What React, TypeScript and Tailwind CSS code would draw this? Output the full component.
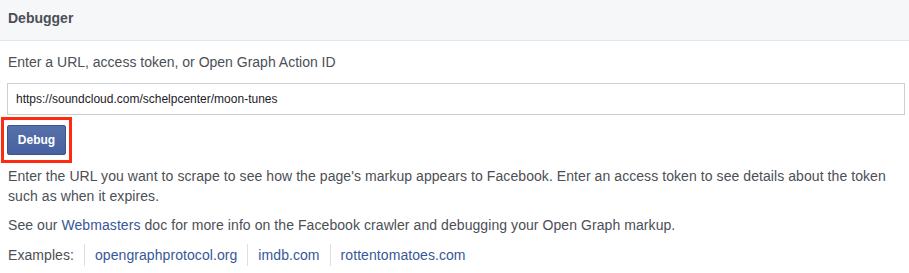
import React from 'react';

const Divider = () => <span className="mx-[10px] inline-block h-[22px] w-px bg-[#dddfe2] align-middle" />;

const App = () => {
  return (
    <div className="w-[909px] h-[273px] bg-white text-[14px] text-[#4b4f56] font-['Liberation_Sans',Arial,sans-serif]">
      <div className="h-[41px] flex items-center pb-[4px] px-[8px] bg-[#f6f7f9] border-b border-[#e5e5e5]">
        <span className="font-bold text-[#4b4f56]">Debugger</span>
      </div>
      <div className="px-[7px]">
        <div className="pt-[12px] leading-[18px] pl-px">Enter a URL, access token, or Open Graph Action ID</div>
        <div className="mt-[12px] h-[32px] w-[898px] border border-[#ccd0d5] flex items-center px-[8px] text-[12px] text-[#1d2129]">
          https://soundcloud.com/schelpcenter/moon-tunes
        </div>
        <div className="mt-[2px] ml-[-6px] w-[71px] h-[46px] border-[3px] border-[#ff2a12] flex items-center pl-[3px]">
          <button className="w-[59px] h-[30px] rounded-[2px] bg-gradient-to-b from-[#5670ab] to-[#4862a0] border border-[#3b5590] text-white text-[12px] font-bold">
            Debug
          </button>
        </div>
        <div className="pl-px tracking-[0.07px]">
          <p className="mt-[3px] leading-[20px]">
            Enter the URL you want to scrape to see how the page's markup appears to Facebook. Enter an access token to see details about the token such as when it expires.
          </p>
          <p className="mt-[9px] leading-[20px]">
            See our <span className="text-[#365899]">Webmasters</span> doc for more info on the Facebook crawler and debugging your Open Graph markup.
          </p>
          <div className="mt-[9px] flex items-center leading-[20px]">
            <span>Examples:</span>
            <Divider />
            <span className="text-[#365899]">opengraphprotocol.org</span>
            <Divider />
            <span className="text-[#365899]">imdb.com</span>
            <Divider />
            <span className="text-[#365899]">rottentomatoes.com</span>
          </div>
        </div>
      </div>
    </div>
  );
};

export default App;
